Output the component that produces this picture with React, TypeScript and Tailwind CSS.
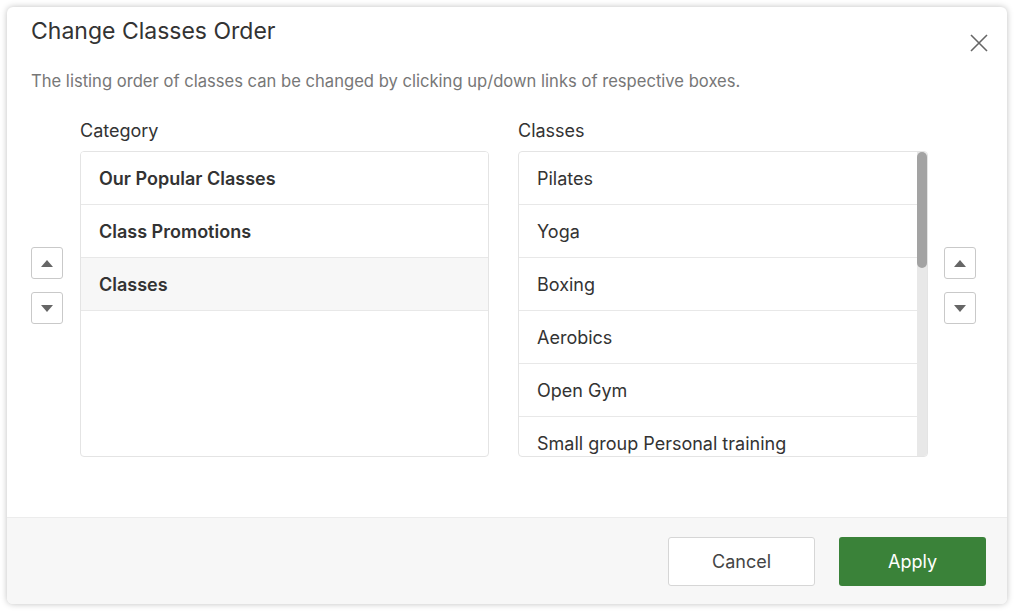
const categories = ["Our Popular Classes", "Class Promotions", "Classes"];
const classes = [
  "Pilates",
  "Yoga",
  "Boxing",
  "Aerobics",
  "Open Gym",
  "Small group Personal training",
];

function ArrowButtons() {
  return (
    <div className="mt-[128px] flex flex-col gap-[13px]">
      <button
        type="button"
        className="flex h-[32px] w-[32px] items-center justify-center rounded-[3px] border border-[#c9c9c9] bg-white"
      >
        <svg width="12" height="7" viewBox="0 0 12 7">
          <path d="M0 7 L6 0 L12 7 Z" fill="#666" />
        </svg>
      </button>
      <button
        type="button"
        className="flex h-[32px] w-[32px] items-center justify-center rounded-[3px] border border-[#c9c9c9] bg-white"
      >
        <svg width="12" height="7" viewBox="0 0 12 7">
          <path d="M0 0 L12 0 L6 7 Z" fill="#666" />
        </svg>
      </button>
    </div>
  );
}

export default function App() {
  return (
    <div
      className="h-[612px] w-[1015px] bg-white pl-[7px] pt-[7px]"
      style={{ fontFamily: 'Inter, "Liberation Sans", sans-serif' }}
    >
      <div className="flex h-[597px] w-[1000px] flex-col overflow-hidden rounded-[6px] bg-white shadow-[0_0_6px_rgba(0,0,0,0.25)]">
        <div className="flex flex-1 flex-col px-[24px]">
          <div className="flex items-start justify-between pt-[9px]">
            <h2 className="text-[23px] leading-[30px] text-[#333]">Change Classes Order</h2>
            <button type="button" className="mr-[-6px] mt-[17px] text-[#666]">
              <svg width="20" height="20" viewBox="0 0 20 20">
                <path d="M2 2 L18 18 M18 2 L2 18" stroke="#666" strokeWidth="1.6" />
              </svg>
            </button>
          </div>
          <p className="mt-[17px] text-[16.6px] leading-[22px] text-[#777]">
            The listing order of classes can be changed by clicking up/down links of respective boxes.
          </p>
          <div className="mt-[27px] flex items-start">
            <ArrowButtons />
            <div className="ml-[17px] flex w-[409px] flex-col">
              <div className="h-[24px] text-[18px] leading-[24px] text-[#333]">Category</div>
              <div className="mt-[8px] h-[306px] overflow-hidden rounded-[4px] border border-[#e4e4e4]">
                {categories.map((c, i) => (
                  <div
                    key={c}
                    className={`flex h-[53px] items-center border-b border-[#e8e8e8] px-[18px] text-[18px] font-semibold text-[#333] ${
                      i === 2 ? "bg-[#f7f7f7]" : "bg-white"
                    }`}
                  >
                    {c}
                  </div>
                ))}
              </div>
            </div>
            <div className="ml-[29px] flex w-[410px] flex-col">
              <div className="h-[24px] text-[18px] leading-[24px] text-[#333]">Classes</div>
              <div className="mt-[8px] flex h-[306px] overflow-hidden rounded-[4px] border border-[#e4e4e4]">
                <div className="flex-1 overflow-hidden">
                  {classes.map((c) => (
                    <div
                      key={c}
                      className="flex h-[53px] shrink-0 items-center border-b border-[#e8e8e8] px-[18px] text-[18px] text-[#333]"
                    >
                      {c}
                    </div>
                  ))}
                </div>
                <div className="w-[10px] bg-[#e8e8e8]">
                  <div className="h-[116px] rounded-[5px] bg-[#a3a3a3]" />
                </div>
              </div>
            </div>
            <div className="ml-[16px]">
              <ArrowButtons />
            </div>
          </div>
        </div>
        <div className="flex h-[87px] items-center justify-end gap-[24px] border-t border-[#ececec] bg-[#f7f7f7] pr-[21px]">
          <button
            type="button"
            className="h-[49px] w-[147px] rounded-[3px] border border-[#d6d6d6] bg-white text-[18px] text-[#444]"
          >
            Cancel
          </button>
          <button
            type="button"
            className="h-[49px] w-[147px] rounded-[3px] bg-[#3a8239] text-[18px] text-white"
          >
            Apply
          </button>
        </div>
      </div>
    </div>
  );
}
